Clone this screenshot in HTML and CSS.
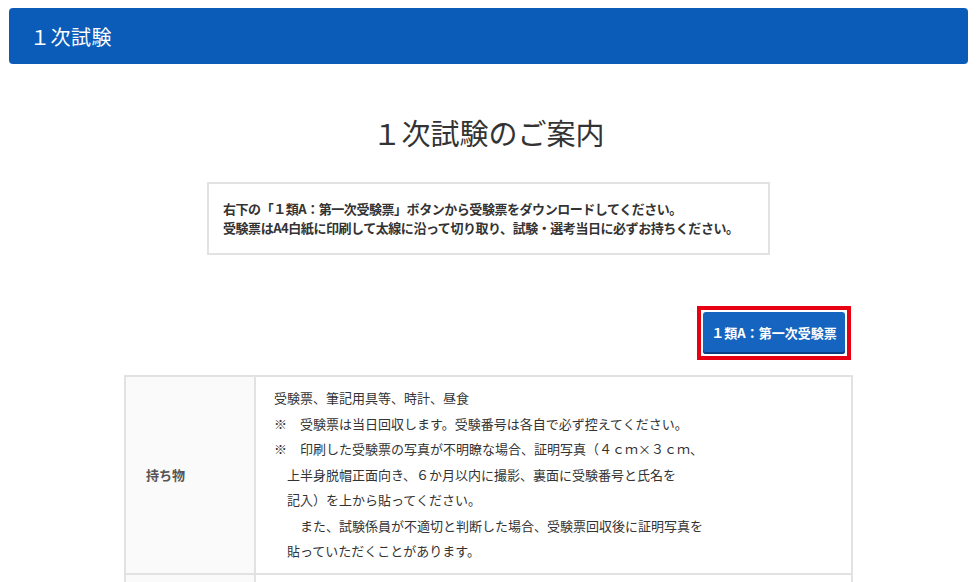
FILE: index.html
```html
<!DOCTYPE html>
<html lang="ja">
<head>
  <meta charset="UTF-8" />
  <meta name="viewport" content="width=device-width, initial-scale=1.0" />
  <title>１次試験</title>
  <link rel="stylesheet" href="styles.css">
</head>
<body>
  <header class="page-head">
    <h1>１次試験</h1>
  </header>

  <main class="container">
    <h2 class="title">１次試験のご案内</h2>

    <div class="notice">
      <p>右下の「１類A：第一次受験票」ボタンから受験票をダウンロードしてください。</p>
      <p>受験票はA4白紙に印刷して太線に沿って切り取り、試験・選考当日に必ずお持ちください。</p>
    </div>

    <div class="actions">
      <div class="dl-frame">
        <a class="dl-btn" href="#">１類A：第一次受験票</a>
      </div>
    </div>

    <table class="info">
      <tr>
        <th>持ち物</th>
        <td>
          <p>受験票、筆記用具等、時計、昼食</p>
          <p>※　受験票は当日回収します。受験番号は各自で必ず控えてください。</p>
          <p>※　印刷した受験票の写真が不明瞭な場合、証明写真（４ｃｍ×３ｃｍ、</p>
          <p class="indent">上半身脱帽正面向き、６か月以内に撮影、裏面に受験番号と氏名を</p>
          <p class="indent">記入）を上から貼ってください。</p>
          <p class="indent">　また、試験係員が不適切と判断した場合、受験票回収後に証明写真を</p>
          <p class="indent">貼っていただくことがあります。</p>
        </td>
      </tr>
      <tr>
        <th>&nbsp;</th>
        <td>&nbsp;</td>
      </tr>
    </table>
  </main>
</body>
</html>
```

FILE: styles.css
```css
:root {
  --brand: #0a5cb8;
  --btn: #1565c0;
  --alert: #e60012;
  --line: #e2e2e2;
  --text: #333;
  --label: #555;
}
body {
  margin: 0;
  background: #fff;
  font-family: "Noto Sans CJK JP", "Noto Sans", sans-serif;
  color: var(--text);
}
p {
  margin: 0;
}
.page-head {
  margin: 8px 9px 0;
  height: 56px;
  background: var(--brand);
  border-radius: 4px;
  display: flex;
  align-items: center;
  padding: 0 21px;
}
.page-head h1 {
  margin: 0;
  color: #fff;
  font-size: 20px;
  font-weight: normal;
  letter-spacing: 0.5px;
}
.container {
  width: 729px;
  margin: 0 auto;
  display: flex;
  flex-direction: column;
  align-items: center;
}
.title {
  margin: 48px 0 30px;
  font-size: 29px;
  font-weight: normal;
  line-height: 40px;
  color: #333;
}
.notice {
  width: 563px;
  box-sizing: border-box;
  border: 2px solid var(--line);
  padding: 15px 14px 16px;
  font-size: 13px;
  font-weight: bold;
  line-height: 19px;
  letter-spacing: -0.45px;
  white-space: nowrap;
}
.actions {
  align-self: stretch;
  display: flex;
  justify-content: flex-end;
  margin: 51px 2px 15px 0;
}
.dl-frame {
  border: 4px solid var(--alert);
  padding: 2px;
}
.dl-btn {
  display: block;
  width: 142px;
  height: 42px;
  line-height: 41px;
  box-sizing: border-box;
  background: var(--btn);
  border-radius: 3px;
  box-shadow: inset 0 -2px 0 #0d3f85;
  color: #fff;
  font-size: 13px;
  font-weight: bold;
  text-align: center;
  text-decoration: none;
}
.info {
  width: 100%;
  border-collapse: collapse;
  font-size: 13px;
}
.info th,
.info td {
  border: 2px solid var(--line);
  vertical-align: middle;
}
.info th {
  width: 130px;
  box-sizing: border-box;
  background: #fafafa;
  color: var(--label);
  text-align: left;
  padding: 0 20px;
  font-weight: bold;
}
.info td {
  padding: 8px 18px 9px;
  line-height: 25.5px;
}
.info .indent {
  padding-left: 13px;
}
```
